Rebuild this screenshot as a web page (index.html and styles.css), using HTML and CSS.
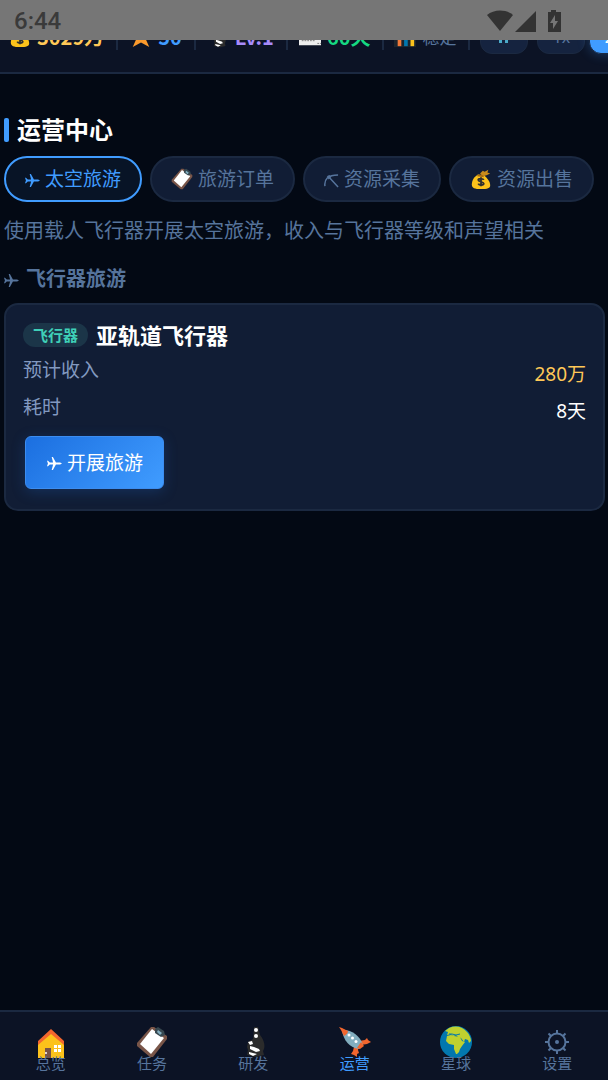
FILE: index.html
```html
<!DOCTYPE html>
<html lang="zh-CN">
<head>
  <meta charset="UTF-8">
  <meta name="viewport" content="width=device-width, initial-scale=1">
  <title>运营中心</title>
  <link rel="stylesheet" href="styles.css">
</head>
<body>

  <!-- 图标库 -->
  <svg class="sprite" aria-hidden="true">
    <symbol id="i-bag" viewBox="0 0 24 24">
      <path d="M11 6l3-3 2 1 4-2-1 3 3 1-4 2-4 1z" fill="#c98b1b"/>
      <path d="M9 7l6 1c4 3 7 7 7 11 0 3-3 4-10 4S2 22 2 18C2 13 5 9 9 7z" fill="#fcc21b"/>
      <path d="M8 8l7 1" stroke="#a86a10" stroke-width="2"/>
      <path d="M15 13c-1-2-6-2-6 0s6 2 6 4-5 2-6 0M12 10v10" stroke="#2f2f2f" stroke-width="2" fill="none"/>
    </symbol>
    <symbol id="i-clip" viewBox="0 0 32 32">
      <path d="M15 1h3l13 9v3L17 31h-3L1 20v-3z" fill="#795548"/>
      <path d="M16 3l12 9-13 16L4 18z" fill="#fff"/>
      <path d="M19 3l3-2 6 4 1 4-4 2-6-4z" fill="#37474f"/>
      <path d="M22 4l4 3-2 2-3-3z" fill="#82aebf"/>
    </symbol>
    <symbol id="i-scope" viewBox="0 0 32 32">
      <path d="M17 1h4l2 8c4 5 6 11 3 16l1 4-8 2-9-2 1-5-1-3 1-5 5-3z" fill="#2b2b2b"/>
      <circle cx="19" cy="4" r="2" fill="#fff"/>
      <circle cx="19" cy="10" r="2" fill="#fff"/>
      <path d="M11 16l4-1 1 3-3 1zM13 20l4 1 5 2 1 2-4 1-6-3zM12 26l8 2-4 2-4-2z" fill="#fff"/>
    </symbol>
    <symbol id="i-home" viewBox="0 0 32 32">
      <path d="M16 6l13 11v15H3V17z" fill="#fcc21b"/>
      <path d="M16 3l13 12v4L16 8 3 19v-4z" fill="#f2662e"/>
      <path d="M10 22h6v10h-6z" fill="#795548"/>
      <circle cx="11" cy="27" r="1" fill="#fff"/>
      <path d="M19 19h3v3h-3zM23 19h3v3h-3zM19 23h3v3h-3zM23 23h3v3h-3z" fill="#fff"/>
    </symbol>
    <symbol id="i-rocket" viewBox="0 0 32 32">
      <path d="M20 15l6-1 2-2 1 2 3 2-2 1-2 1-6 1zM15 21l5-2-1 5 1 3-2 1v3l-3-2-3-1 2-3z" fill="#f2662e"/>
      <path d="M3 4c8-1 18 5 21 15l-4 4C11 22 4 14 3 4z" fill="#82aebf"/>
      <path d="M0 1l3 1 6 3c0 2-2 4-4 5L2 4z" fill="#f2662e"/>
      <path d="M22 16l3 4-4 3-3-1z" fill="#f2662e"/>
      <circle cx="10" cy="9" r="1.500" fill="#fff"/>
      <circle cx="13.500" cy="12" r="1.500" fill="#fff"/>
      <circle cx="17" cy="15.500" r="1.500" fill="#fff"/>
    </symbol>
    <symbol id="i-earth" viewBox="0 0 32 32">
      <circle cx="16" cy="16" r="16" fill="#0277ae"/>
      <path d="M9 2c7-3 14-1 18 4 2 2 4 6 4 9l-2 2-1-3-3-1-1 3-3-4-3-1-2-2-3 1-2-2-4 1 1-3-3-1z" fill="#bfd12f"/>
      <path d="M7 10l4-1 3 1 6 1 2 4 3 1-3 4-2 3-1 3-2 2h-1l-2-5v-4l-5-1-3-3z" fill="#bfd12f"/>
      <path d="M9 8l3 0 4 1 4-1" stroke="#0277ae" fill="none"/>
    </symbol>
    <symbol id="i-gear" viewBox="0 0 24 24">
      <circle cx="12" cy="12" r="8.500" fill="none" stroke="currentColor" stroke-width="2"/>
      <circle cx="12" cy="12" r="2" fill="currentColor"/>
      <path d="M12 0v4M12 20v4M0 12h4M20 12h4M3.500 3.500L6 6M18 18l2.500 2.500M20.500 3.500L18 6M6 18l-2.500 2.500" stroke="currentColor" stroke-width="2"/>
    </symbol>
    <symbol id="i-plane" viewBox="0 0 16 16">
      <path d="M5 1h1.300L9.500 7H14l2 1-2 1H9.500l-3.200 6H5l1.500-6H3l-2 2H0l1-3-1-3h1l2 2h3.500z" fill="currentColor"/>
    </symbol>
    <symbol id="i-pick" viewBox="0 0 16 16">
      <path d="M1 14C0 7 4 2 15 2M4 3l11 12" stroke="currentColor" stroke-width="1.600" fill="none"/>
      <path d="M3 4l3-2 2 2-3 3z" fill="currentColor"/>
    </symbol>
    <symbol id="i-star" viewBox="0 0 24 24">
      <path d="M12 1l3 8h8l-6 5 4 9-9-5-9 5 4-9-6-5h8z" fill="#fb9a2c"/>
    </symbol>
    <symbol id="i-date" viewBox="0 0 24 24">
      <path d="M0 3h24v18H0z" fill="#eee"/>
      <path d="M3 16h15M20 19h4" stroke="#777" stroke-dasharray="2 1"/>
    </symbol>
    <symbol id="i-chart" viewBox="0 0 24 24">
      <path d="M0 1h24v22H0z" fill="#1c252e"/>
      <path d="M4 9h4v13H4z" fill="#f2793a"/>
      <path d="M11 4h4v18h-4z" fill="#0277ae"/>
      <path d="M18 7h4v15h-4z" fill="#fcc21b"/>
    </symbol>
  </svg>

  <!-- 系统状态栏 -->
  <div class="status">
    <span class="clock">6:44</span>
    <svg class="sys" viewBox="0 0 76 24" aria-hidden="true">
      <path d="M0 6C7 0 19 0 26 6L13 22z"/>
      <path d="M49 2v21H28z"/>
      <path d="M64 1h5v2h5v20H61V3h3z"/>
      <path class="bolt" d="M68 6l-5 8h3v6l5-8h-3z"/>
    </svg>
  </div>

  <!-- 资源栏 -->
  <header class="resources">
    <div class="res gold"><svg><use href="#i-bag"/></svg>3029万</div>
    <div class="res blue"><svg><use href="#i-star"/></svg>50</div>
    <div class="res violet"><svg><use href="#i-scope"/></svg>Lv.1</div>
    <div class="res green"><svg><use href="#i-date"/></svg>60天</div>
    <div class="res market"><svg><use href="#i-chart"/></svg>稳定</div>
    <div class="speeds">
      <button class="speed pause" aria-label="暂停"><svg viewBox="0 0 10 12"><path d="M0 0h3v12H0zM6 0h3v12H6z"/></svg></button>
      <button class="speed">1x</button>
      <button class="speed on">2x</button>
    </div>
  </header>

  <main>
    <h1>运营中心</h1>

    <div class="tabs">
      <button class="tab on"><svg class="glyph"><use href="#i-plane"/></svg>太空旅游</button>
      <button class="tab"><svg><use href="#i-clip"/></svg>旅游订单</button>
      <button class="tab"><svg class="glyph"><use href="#i-pick"/></svg>资源采集</button>
      <button class="tab"><svg><use href="#i-bag"/></svg>资源出售</button>
    </div>

    <p class="desc">使用载人飞行器开展太空旅游，收入与飞行器等级和声望相关</p>

    <h2><svg class="glyph"><use href="#i-plane"/></svg>飞行器旅游</h2>

    <section class="card">
      <h3><span class="tag">飞行器</span>亚轨道飞行器</h3>
      <dl>
        <div><dt>预计收入</dt><dd class="income">280万</dd></div>
        <div><dt>耗时</dt><dd>8天</dd></div>
      </dl>
      <button class="go"><svg class="glyph"><use href="#i-plane"/></svg>开展旅游</button>
    </section>
  </main>

  <!-- 底部导航 -->
  <nav>
    <a href="#"><svg><use href="#i-home"/></svg>总览</a>
    <a href="#"><svg><use href="#i-clip"/></svg>任务</a>
    <a href="#"><svg><use href="#i-scope"/></svg>研发</a>
    <a href="#" class="on"><svg><use href="#i-rocket"/></svg>运营</a>
    <a href="#"><svg><use href="#i-earth"/></svg>星球</a>
    <a href="#"><svg class="gear"><use href="#i-gear"/></svg>设置</a>
  </nav>

</body>
</html>
```
FILE: styles.css
```css
/* ---------- Variables ---------- */
:root{
  --bg:#030914;
  --bar:#0c1325;
  --panel:#111d35;
  --line:#1b2941;
  --blue:#409cff;
  --muted:#56749c;
  --label:#8299c0;
}
*{box-sizing:border-box}
body{
  margin:0;
  min-height:100vh;
  display:flex;
  flex-direction:column;
  background:var(--bg);
  color:#fff;
  font-family:"Noto Sans","Noto Sans CJK SC",sans-serif;
  font-size:19px;
  line-height:28px;
}
h1,h2,h3,p,dl,dd{margin:0}
button{font:inherit;color:inherit;cursor:pointer}
svg{flex:none}
.sprite{display:none}
.glyph{width:15px;height:15px;margin-top:2px}

/* ---------- Barra de estado ---------- */
.status{
  position:relative;
  z-index:1;
  height:40px;
  display:flex;
  align-items:center;
  justify-content:space-between;
  padding:2px 45px 0 14px;
  background:#767676;
  color:#3a3a3a;
}
.clock{font:500 24px/38px Roboto,sans-serif}
.sys{width:76px;height:24px;fill:#333}
.sys .bolt{fill:#767676}

/* ---------- Recursos ---------- */
.resources{
  display:flex;
  align-items:center;
  height:70px;
  margin-top:-36px;
  padding-bottom:2px;
  background:var(--bar);
  border-bottom:2px solid var(--line);
  white-space:nowrap;
  overflow:hidden;
}
.res{
  display:flex;
  align-items:center;
  gap:6px;
  height:26px;
  padding:0 12px 0 11px;
  border-right:2px solid var(--line);
  font-family:"Noto Sans CJK SC",sans-serif;
  font-size:20px;
  font-weight:700;
}
.res:first-child{padding-left:9px}
.res svg{width:22px;height:22px}
.gold{color:#ffc857}
.blue{padding-left:12px;color:var(--blue)}
.violet{color:#a78bfa}
.green{color:#16d982}
.market{padding-left:10px;color:var(--muted);font-weight:400;font-size:17px}
.speeds{display:flex;padding-left:10px}
.speed{
  width:48px;
  height:34px;
  margin-right:4px;
  padding:0;
  border:1px solid var(--line);
  border-radius:12px;
  background:#15233f;
  color:var(--muted);
  font-size:16px;
}
.pause{margin-right:9px}
.pause svg{width:10px;height:12px;fill:#4baac8}
.speed.on{background:var(--blue);color:#fff;box-shadow:0 0 12px #409cff4d}

/* ---------- Contenido ---------- */
main{flex:1;padding:40px 3px 0 4px}
h1{
  display:flex;
  align-items:center;
  gap:8px;
  font-size:24px;
  line-height:32px;
}
h1::before{
  content:"";
  width:5px;
  height:24px;
  border-radius:2px;
  background:var(--blue);
}
.tabs{
  display:flex;
  gap:8px;
  margin-top:10px;
}
.tab{
  display:flex;
  align-items:center;
  gap:5px;
  height:46px;
  padding:0 19px;
  border:2px solid var(--line);
  border-radius:23px;
  background:var(--panel);
  color:var(--muted);
  white-space:nowrap;
}
.tab svg:not(.glyph){width:22px;height:22px}
.tab.on{
  border-color:var(--blue);
  background:#081426;
  color:var(--blue);
}
.desc{
  margin-top:15px;
  color:var(--muted);
  font-size:20px;
}
h2{
  display:flex;
  align-items:center;
  gap:7px;
  margin-top:20px;
  color:var(--muted);
  font-size:20px;
  line-height:28px;
}

/* ---------- Tarjeta ---------- */
.card{
  margin-top:10px;
  padding:15px 17px 20px;
  border:2px solid var(--line);
  border-radius:14px;
  background:var(--panel);
}
h3{
  display:flex;
  align-items:center;
  gap:8px;
  font-size:22px;
  line-height:30px;
}
.tag{
  padding:0 10px;
  border-radius:12px;
  background:#1b3548;
  color:#3fd0b8;
  font-size:15px;
  line-height:24px;
}
dl{padding-top:6px}
dl div{
  display:flex;
  justify-content:space-between;
  height:37px;
}
dt{color:var(--label)}
dd{padding-top:4px}
.income{color:#ffc857}
.go{
  display:flex;
  align-items:center;
  gap:5px;
  height:53px;
  margin:6px 0 0 2px;
  padding:0 20px 0 21px;
  border:1px solid #3c8df0;
  border-radius:6px;
  background:linear-gradient(135deg,#1b6fe0,#409cff);
  box-shadow:0 3px 14px #1d5fb84d;
}

/* ---------- Navegación ---------- */
nav{
  display:flex;
  height:70px;
  padding-top:14px;
  border-top:2px solid var(--line);
  background:var(--bar);
}
nav a{
  flex:1;
  display:flex;
  flex-direction:column;
  align-items:center;
  color:var(--muted);
  font-size:15px;
  line-height:16px;
  text-decoration:none;
}
nav a.on{color:var(--blue)}
nav svg{width:32px;height:32px;margin-bottom:-3px}
nav .gear{padding:4px}
```
